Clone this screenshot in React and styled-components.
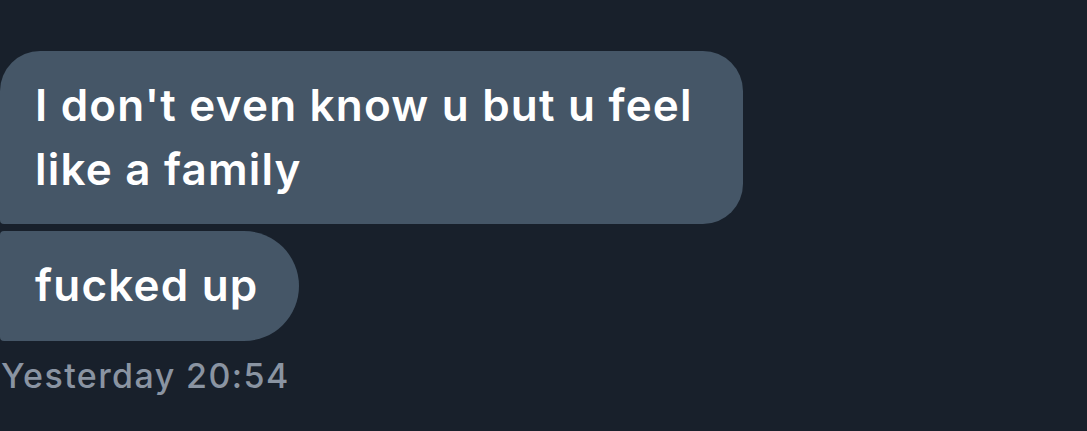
import React from 'react';
import styled, { createGlobalStyle } from 'styled-components';

const GlobalStyle = createGlobalStyle`
  html, body {
    margin: 0;
    padding: 0;
    background: #18202b;
  }
  body {
    font-family: Inter, "Noto Sans", sans-serif;
    -webkit-font-smoothing: antialiased;
  }
`;

const Thread = styled.div`
  width: 1087px;
  height: 431px;
  box-sizing: border-box;
  padding-top: 51px;
  display: flex;
  flex-direction: column;
  align-items: flex-start;
  gap: 7px;
  overflow: hidden;
  background: #18202b;
`;

const Bubble = styled.div`
  box-sizing: border-box;
  max-width: 743px;
  padding: 22px ${(p) => p.padRight || 35}px ${(p) => p.padBottom || 23}px 35px;
  background: #455667;
  color: #ffffff;
  font-size: 44px;
  font-weight: 600;
  line-height: 64px;
  letter-spacing: 1.2px;
  border-radius: ${(p) => p.radius};
`;

const Stamp = styled.div`
  margin-top: 8px;
  padding-left: 1px;
  color: #8a94a2;
  font-size: 34px;
  font-weight: 500;
  line-height: 40px;
  letter-spacing: 1.4px;
`;

export default function App() {
  return (
    <>
      <GlobalStyle />
      <Thread>
        <Bubble radius="40px 40px 40px 4px">I don't even know u but u feel like a family</Bubble>
        <Bubble radius="4px 55px 55px 4px" padRight={40} padBottom={24}>fucked up</Bubble>
        <Stamp>Yesterday 20:54</Stamp>
      </Thread>
    </>
  );
}
